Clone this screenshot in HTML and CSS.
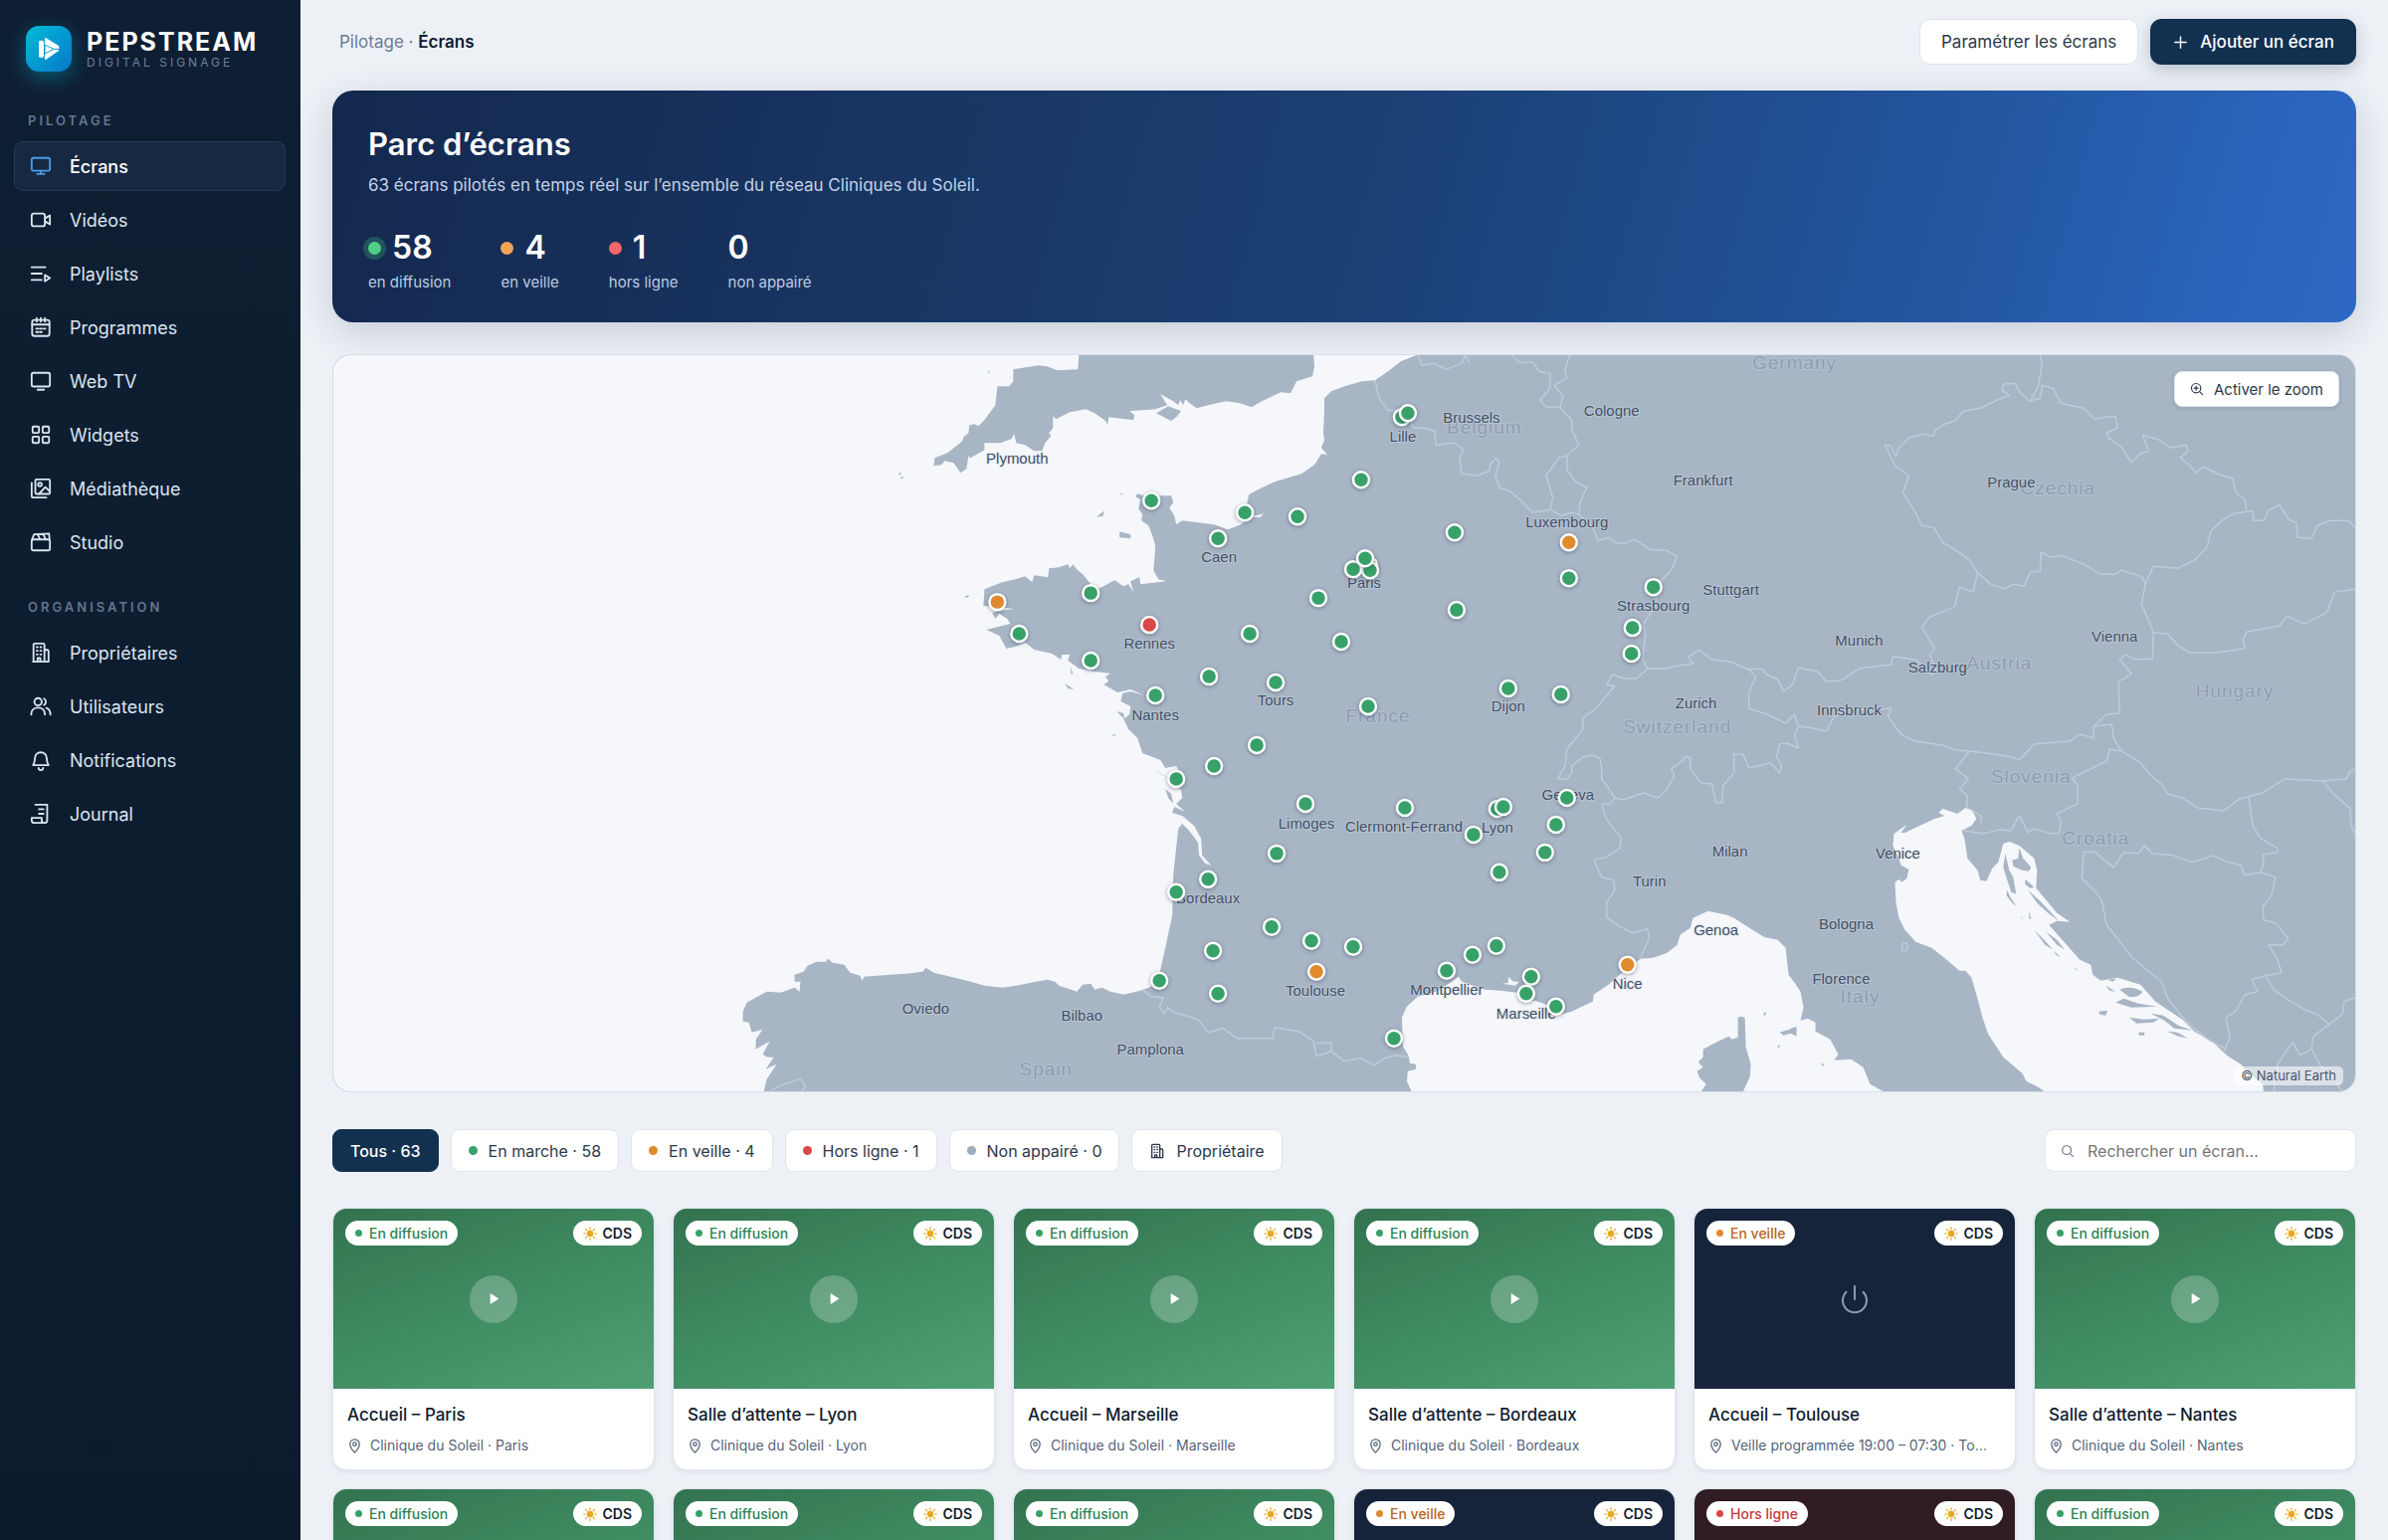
FILE: index.html
```html
<!DOCTYPE html>
<html lang="fr">
<head>
<meta charset="utf-8">
<meta name="viewport" content="width=device-width, initial-scale=1">
<title>Pepstream – Écrans</title>
<link rel="stylesheet" href="styles.css">
</head>
<body>
<svg class="sprite" aria-hidden="true">
  <symbol id="i-monitor" viewBox="0 0 24 24"><rect x="2" y="3" width="20" height="14" rx="2"/><path d="M12 17v3.500M8 20.500h8"/></symbol>
  <symbol id="i-video" viewBox="0 0 24 24"><rect x="2" y="5" width="14.500" height="14" rx="2.500"/><path d="M16.500 10.500 22 7v10l-5.500-3.500"/></symbol>
  <symbol id="i-playlist" viewBox="0 0 24 24"><path d="M2 5h15M2 12h11M2 19h11M16.500 13.500v7L22 17Z"/></symbol>
  <symbol id="i-calendar" viewBox="0 0 24 24"><rect x="2.500" y="4" width="19" height="17.500" rx="2.500"/><path d="M2.500 9h19M7.500 1.800v4M16.500 1.800v4M12 1.800v4"/><path d="M7 13.500h2M11 13.500h2M15 13.500h2M7 17.200h2M11 17.200h2"/></symbol>
  <symbol id="i-tv" viewBox="0 0 24 24"><rect x="2" y="3" width="20" height="15" rx="2"/><path d="M8.500 21.500h7"/></symbol>
  <symbol id="i-grid" viewBox="0 0 24 24"><rect x="3" y="3" width="7" height="7" rx="1"/><rect x="14" y="3" width="7" height="7" rx="1"/><rect x="3" y="14" width="7" height="7" rx="1"/><rect x="14" y="14" width="7" height="7" rx="1"/></symbol>
  <symbol id="i-images" viewBox="0 0 24 24"><rect x="6" y="2" width="16" height="16" rx="1.500"/><path d="M2 6v14.500A1.500 1.500 0 0 0 3.500 22H18M10 18l7-7.500 5 5"/><circle cx="11" cy="7.500" r="2"/></symbol>
  <symbol id="i-clap" viewBox="0 0 24 24"><rect x="2" y="9" width="20" height="12" rx="2"/><path d="M2.500 9 4.500 3.500 21 2.500 21.500 8M8.500 3.500l2.500 5M14.500 3l2.500 5"/></symbol>
  <symbol id="i-building" viewBox="0 0 24 24"><path d="M4 22V3.500A1.500 1.500 0 0 1 5.500 2h9A1.500 1.500 0 0 1 16 3.500V22M16 9h3a1.500 1.500 0 0 1 1.500 1.500V22H3.500M8.500 22v-4h3v4"/><path d="M7.500 6h1M11.500 6h1M7.500 10h1M11.500 10h1M7.500 14h1M11.500 14h1"/></symbol>
  <symbol id="i-users" viewBox="0 0 24 24"><circle cx="9" cy="7" r="4"/><path d="M1.500 21c0-4.500 3-7.500 7.500-7.500s7.500 3 7.500 7.500M15.500 3.500a4 4 0 0 1 0 7M18 13.800c3 1 4.500 3.700 4.500 7.200"/></symbol>
  <symbol id="i-bell" viewBox="0 0 24 24"><path d="M3.500 17.500c1.500-2 2-4 2-7.500a6.500 6.500 0 0 1 13 0c0 3.500.5 5.500 2 7.500ZM9.500 20.500a2.500 2.500 0 0 0 5 0"/></symbol>
  <symbol id="i-scroll" viewBox="0 0 24 24"><path d="M6 2h13v17a3 3 0 0 1-3 3H5a3 3 0 0 1-3-3v-2.500h11V19a3 3 0 0 0 3 3M10 7h5M10 12h5"/></symbol>
  <symbol id="i-plus" viewBox="0 0 24 24"><path d="M12 4v16M4 12h16"/></symbol>
  <symbol id="i-search" viewBox="0 0 24 24"><circle cx="10.500" cy="10.500" r="7.500"/><path d="m16 16 5.500 5.500"/></symbol>
  <symbol id="i-zoom" viewBox="0 0 24 24"><circle cx="10.500" cy="10.500" r="8"/><path d="m16.500 16.500 5 5M10.500 7v7M7 10.500h7"/></symbol>
  <symbol id="i-pin" viewBox="0 0 24 24"><path d="M12 22.500S4.500 15 4.500 9a7.500 7.500 0 0 1 15 0c0 6-7.500 13.500-7.500 13.500Z"/><circle cx="12" cy="9" r="2.800"/></symbol>
  <symbol id="i-play" viewBox="0 0 24 24"><path d="M5 2v20l16-10Z"/></symbol>
  <symbol id="i-power" viewBox="0 0 24 24"><path d="M12 2v10M18.400 6.600a9 9 0 1 1-12.800 0"/></symbol>
  <symbol id="i-sun" viewBox="0 0 24 24"><circle cx="12" cy="12" r="5.500" fill="currentColor" stroke="none"/><path d="M12 1v3.500M12 19.500V23M1 12h3.500M19.500 12H23M4.200 4.200l2.500 2.500M17.300 17.300l2.500 2.500M4.200 19.800l2.500-2.500M17.300 6.700l2.500-2.500"/></symbol>
</svg>

<div class="app">
  <aside class="sidebar">
    <div class="brand">
      <svg class="brand-logo" viewBox="0 0 138 138" aria-hidden="true">
        <rect x="39" y="44" width="15" height="52" rx="5" fill="#fff"/>
        <path d="M60 36 99 60Q103 66 99 75L60 102Q57 103 57 99V39Q57 35 60 36Z" fill="#fff"/>
        <path d="M57 57v27l27-14Z" fill="#fff" stroke="#129bd0" stroke-width="3" stroke-linejoin="round"/>
        <path d="M84 70h18" stroke="#129bd0" stroke-width="3"/>
      </svg>
      <div class="brand-text">
        <span class="brand-name">PEPSTREAM</span>
        <span class="brand-tag">DIGITAL SIGNAGE</span>
      </div>
    </div>
    <nav class="nav">
      <h2 class="nav-title">PILOTAGE</h2>
      <a class="nav-item active" href="#ecrans"><svg class="icon"><use href="#i-monitor"/></svg>Écrans</a>
      <a class="nav-item" href="#videos"><svg class="icon"><use href="#i-video"/></svg>Vidéos</a>
      <a class="nav-item" href="#playlists"><svg class="icon"><use href="#i-playlist"/></svg>Playlists</a>
      <a class="nav-item" href="#programmes"><svg class="icon"><use href="#i-calendar"/></svg>Programmes</a>
      <a class="nav-item" href="#webtv"><svg class="icon"><use href="#i-tv"/></svg>Web TV</a>
      <a class="nav-item" href="#widgets"><svg class="icon"><use href="#i-grid"/></svg>Widgets</a>
      <a class="nav-item" href="#mediatheque"><svg class="icon"><use href="#i-images"/></svg>Médiathèque</a>
      <a class="nav-item" href="#studio"><svg class="icon"><use href="#i-clap"/></svg>Studio</a>
      <h2 class="nav-title">ORGANISATION</h2>
      <a class="nav-item" href="#proprietaires"><svg class="icon"><use href="#i-building"/></svg>Propriétaires</a>
      <a class="nav-item" href="#utilisateurs"><svg class="icon"><use href="#i-users"/></svg>Utilisateurs</a>
      <a class="nav-item" href="#notifications"><svg class="icon"><use href="#i-bell"/></svg>Notifications</a>
      <a class="nav-item" href="#journal"><svg class="icon"><use href="#i-scroll"/></svg>Journal</a>
    </nav>
  </aside>

  <main class="main">
    <header class="topbar">
      <p class="crumbs">Pilotage · <strong>Écrans</strong></p>
      <div class="actions">
        <button class="btn" type="button">Paramétrer les écrans</button>
        <button class="btn btn-primary" type="button"><svg class="icon"><use href="#i-plus"/></svg>Ajouter un écran</button>
      </div>
    </header>

    <section class="hero">
      <h1>Parc d’écrans</h1>
      <p class="hero-sub">63 écrans pilotés en temps réel sur l’ensemble du réseau Cliniques du Soleil.</p>
      <div class="stats">
        <div class="stat"><p class="stat-value"><i class="stat-dot live"></i>58</p><p class="stat-label">en diffusion</p></div>
        <div class="stat"><p class="stat-value"><i class="stat-dot idle"></i>4</p><p class="stat-label">en veille</p></div>
        <div class="stat"><p class="stat-value"><i class="stat-dot down"></i>1</p><p class="stat-label">hors ligne</p></div>
        <div class="stat"><p class="stat-value">0</p><p class="stat-label">non appairé</p></div>
      </div>
    </section>

    <section class="map">
      <svg class="map-canvas" viewBox="334 356 2034 742" preserveAspectRatio="xMidYMid slice" role="img" aria-label="Carte des écrans">
        <g class="sea">
          <!-- Atlantic, Channel and North Sea -->
          <path d="M334 356H1084L1083 371 1062 372 1052 368 1043 367 1018 371 1018 383 1014 388 1002 388 1000 407 989 422 983 428 979 426 974 427 973 435 968 439 967 443 952 455 939 460 938 468 946 467 949 463 958 465 965 475 971 471 973 458 975 460 989 452 989 445 1005 445 1016 441 1019 436 1021 445 1030 447 1039 453 1047 453 1050 445 1056 438 1054 435 1058 430 1058 418 1061 421 1075 414 1091 411 1100 415 1111 423 1113 427 1114 419 1139 422 1140 417 1135 413 1161 411 1173 407 1166 396 1179 403 1184 407 1186 402 1189 407 1191 401 1198 407 1203 410 1214 407 1232 403 1246 405 1258 409 1268 403 1287 394 1297 395 1303 383 1319 378 1321 368 1320 356H1425L1408 363 1395 373 1382 382 1369 383 1351 388 1338 393 1331 400 1331 410 1330 435 1331 442 1328 450 1334 457 1328 456 1321 467 1308 476 1281 484 1264 492 1255 497 1253 507 1253 515 1262 518 1270 516 1266 520 1257 519 1247 527 1234 532 1220 527 1188 523 1182 527 1180 518 1175 510 1179 505 1177 498 1166 498 1155 500 1143 496 1141 499 1146 502 1144 511 1148 517 1147 523 1154 528 1158 538 1161 548 1160 563 1159 573 1164 582 1172 584 1146 587 1145 580 1136 584 1139 595 1134 587 1129 589 1120 583 1105 591 1096 587 1088 577 1082 572 1078 567 1075 571 1073 567 1064 570 1054 571 1053 580 1039 578 1037 585 1030 579 1020 582 1007 585 989 592 988 609 1000 610 1018 612 1004 614 997 616 1000 622 1004 617 1012 622 1015 627 991 633 1004 639 1011 652 1020 650 1030 646 1039 653 1057 657 1066 663 1067 658 1075 658 1073 664 1084 672 1100 675 1116 677 1111 680 1114 685 1109 688 1123 696 1136 693 1150 699 1136 695 1128 697 1126 705 1136 710 1135 718 1129 723 1134 733 1143 742 1148 757 1166 764 1171 772 1182 770 1186 777 1179 790 1187 794 1188 802 1182 808 1191 816 1180 811 1178 817 1188 820 1200 830 1207 843 1208 860 1217 870 1211 868 1205 860 1204 847 1195 835 1188 828 1184 833 1179 880 1178 920 1171 953 1165 980 1157 992 1146 996 1129 1000 1116 997 1107 993 1100 995 1096 989 1088 990 1082 997 1064 991 1060 987 1052 985 1041 987 1021 991 1007 993 989 991 975 987 955 982 938 978 930 973 927 977 911 979 895 980 868 982 866 986 864 981 854 978 848 970 836 968 832 964 829 967 820 967 811 971 807 977 798 980 798 987 804 987 803 997 798 993 784 998 770 997 759 1003 750 1008 746 1017 746 1027 752 1028 755 1038 766 1035 759 1045 759 1055 773 1047 766 1060 771 1063 777 1063 769 1075 780 1070 770 1085 767 1098H334Z"/>
          <!-- Western Mediterranean -->
          <path d="M1419 1098 1414 1087 1415 1077 1423 1075 1423 1070 1417 1069 1416 1062 1410 1052 1409 1023 1414 1012 1425 1002 1443 997 1458 988 1466 982 1469 987 1492 995 1508 996 1516 997 1527 998 1536 1007 1543 1006 1554 1010 1569 1020 1580 1017 1588 1013 1601 1007 1602 1000 1617 990 1628 980 1639 972 1649 964 1662 963 1676 958 1686 950 1689 940 1699 933 1702 923 1717 916 1736 920 1743 923 1757 932 1773 942 1787 945 1795 953 1798 980 1804 988 1810 997 1813 1013 1810 1026 1817 1024 1825 1028 1825 1037 1840 1045 1848 1060 1844 1066 1861 1065 1873 1073 1880 1090 1894 1098Z"/>
          <path d="M1516 982 1521 987 1527 987 1523 991 1510 989 1516 988Z"/>
          <!-- Adriatic -->
          <path d="M2056 1098 2049 1093 2037 1087 2033 1079 2014 1063 1999 1040 1993 1023 1989 1007 1982 983 1976 976 1970 976 1957 965 1942 953 1926 947 1915 935 1909 923 1906 907 1905 887 1909 884 1912 887 1917 883 1919 874 1911 870 1909 863 1903 850 1904 838 1917 829 1911 837 1915 837 1945 823 1955 820 1949 817 1953 813 1968 818 1976 812 1983 815 1987 823 1982 830 1972 835 1975 843 1978 863 1988 875 1991 885 1997 886 2003 873 2009 867 2014 848 2020 846 2030 850 2045 863 2048 875 2047 893 2068 918 2081 927 2068 926 2060 930 2076 948 2091 965 2102 970 2104 980 2112 986 2129 983 2152 990 2167 1007 2194 1025 2206 1037 2225 1048 2240 1062 2253 1070 2259 1077 2275 1090 2276 1098Z"/>
        </g>
        <g class="land">
          <path d="M1162 415 1174 408 1187 413 1183 418 1177 423Z"/>
          <path d="M1102 519 1110 513 1108 519ZM1125 534 1136 537 1136 541 1125 540ZM969 600 972 598 974 599 971 601ZM1070 687 1079 693 1073 692ZM1076 670 1078 678 1076 677ZM1122 715 1130 723 1129 717ZM1117 739 1122 740 1119 738ZM1161 775 1173 781 1179 784 1166 778ZM1171 793 1177 798 1179 808 1174 802ZM903 475h2v2h-2ZM905 479h2v2h-2ZM993 372h1v3h-1ZM1126 496h2v1h-2Z"/>
          <path d="M1750 1022 1754 1023 1755 1053 1760 1070 1759 1083 1752 1098H1710L1715 1090 1708 1083 1706 1077 1712 1073 1707 1068 1712 1063 1712 1055 1725 1048 1738 1042 1741 1045 1747 1043 1747 1023Z"/>
          <path d="M1789 1038 1799 1035 1806 1033 1806 1042 1800 1039 1793 1041ZM1773 1019 1775 1017 1775 1020 1773 1022ZM1787 1051h2v2h-2ZM1831 1068 1834 1071 1832 1072ZM1800 1034 1806 1032 1805 1041 1801 1039Z"/>
          <path d="M2016 858 2020 875 2024 882 2027 899 2022 897 2018 885 2014 872ZM2030 852 2034 863 2042 872 2040 876 2033 875 2024 871 2023 865 2029 863ZM2036 884 2045 892 2041 893 2036 889ZM2039 895 2050 905 2071 927 2059 918 2048 908ZM2018 895 2021 902 2027 911 2023 908 2017 900ZM2040 916 2042 924 2040 924ZM2031 921 2035 925 2032 923ZM2045 935 2055 945 2064 955 2056 950ZM2057 937 2067 944 2076 955 2068 950ZM2065 956 2072 963 2067 960ZM2085 972 2091 977 2086 974Z"/>
          <path d="M2131 995Q2142 990 2154 997 2150 1004 2140 1002ZM2127 1008 2135 1004 2150 1009 2169 1012 2143 1013ZM2141 1023 2155 1025 2171 1024 2165 1028 2148 1029ZM2162 1019 2175 1021 2190 1031 2204 1036 2186 1034 2176 1026ZM2110 1017 2119 1016 2117 1021 2111 1020ZM2179 1037 2189 1038 2200 1044 2190 1042ZM2150 1038h6v3h-5ZM2117 991 2127 997 2121 996ZM2119 985 2128 984 2124 987Z"/>
        </g>
        <g class="borders">
          <path d="M1382 382 1386 400 1395 412 1406 413 1416 420 1421 430 1432 430 1442 433 1443 447 1462 445 1471 452 1467 460 1469 476 1484 478 1497 473 1498 466 1504 460 1507 465 1503 477 1507 490 1517 493 1529 503 1540 515 1558 512 1569 518 1580 515 1587 517 1601 530 1606 543 1617 540 1624 545 1632 546 1643 542 1658 552 1675 553 1686 559 1680 573 1673 580 1664 592 1665 607 1652 627 1654 640 1651 662 1656 672 1645 682 1632 682 1621 678 1615 688 1623 690 1604 712 1591 722 1591 733 1575 753 1573 770 1566 783 1575 783 1580 777 1580 770 1591 761 1600 759 1608 762 1610 772 1610 784 1614 788 1623 802 1619 808 1610 808 1614 822 1621 832 1630 842 1628 853 1614 862 1602 864 1610 882 1622 885 1623 895 1615 907 1615 922 1626 930 1641 938 1656 934 1658 943 1649 963"/>
          <path d="M1623 802 1632 804 1652 797 1667 802 1676 793 1683 780 1680 773 1691 765 1695 760 1699 762 1699 773 1710 787 1721 788 1725 807 1731 807 1732 790 1743 777 1743 758 1752 758 1758 772 1780 767 1789 777 1791 770 1786 760 1789 748 1797 747 1808 752 1804 740 1808 730 1804 718 1795 727 1776 718 1758 712 1758 697 1765 680 1758 673"/>
          <path d="M1656 672 1673 672 1688 669 1702 667 1697 660 1708 653 1721 663 1739 665 1758 673 1771 672 1776 678 1787 683 1793 695 1802 688 1808 671 1827 675 1836 685 1850 684 1869 672 1901 668 1903 660 1926 663 1942 678 1947 675 1940 658 1945 652 1932 630 1940 620 1965 610 1970 590 1984 595 1988 575"/>
          <path d="M1808 730 1823 732 1836 735 1844 720 1860 712 1880 714 1901 712 1898 720 1911 738 1925 745 1953 749 1966 754 1980 755 2005 758 2022 761 2030 764 2045 748 2081 745 2091 738 2105 742 2105 730 2118 718 2131 717 2130 685 2143 677 2131 663 2137 658 2148 663 2164 662 2165 636 2160 623 2153 607 2157 587"/>
          <path d="M1988 575 2001 587 2016 592 2024 587 2035 589 2041 575 2051 574 2052 555 2062 560 2072 558 2095 567 2112 577 2127 577 2133 573 2154 580 2157 587 2165 569 2190 571 2206 563 2219 550 2223 533 2234 523 2246 516 2265 513 2266 523 2276 523 2281 513 2292 507 2301 522 2309 525 2310 540 2324 541 2330 528 2343 523 2361 523 2368 530"/>
          <path d="M2259 513 2257 502 2248 495 2245 481 2230 476 2215 469 2208 475 2201 467 2192 460 2200 453 2198 447 2183 450 2171 442 2154 437 2160 453 2151 456 2143 465 2133 449 2120 440 2118 435 2129 430 2127 418 2118 419 2106 421 2095 410 2072 405 2064 390 2053 387 2051 400 2040 403 2030 393 2026 385 2014 386 2013 392 2020 397 2005 403 1991 410 1974 413 1965 423 1955 426 1945 432 1944 438 1934 436 1919 440 1909 450 1906 459 1901 448 1895 447 1905 468 1919 478 1913 495 1924 512 1932 528 1944 530 1954 546 1965 552 1980 563 1988 575"/>
          <path d="M2051 356 2053 367 2049 388 2041 403M2165 636 2179 637 2190 649 2202 656 2229 656 2257 652 2255 643 2259 635 2292 629 2299 619 2317 627 2340 615 2347 595 2368 592"/>
          <path d="M2105 730 2123 728 2125 742 2133 755 2121 753 2118 765 2100 774 2083 782 2089 790 2089 808 2068 818 2072 825 2070 838 2062 838 2045 833 2039 837 2030 820 2022 835 2010 834 1995 838 1974 835M1980 755 1966 773 1979 783 1970 793 1978 800 1977 811 1991 820 1992 827"/>
          <path d="M2133 755 2152 767 2163 780 2175 790 2179 798 2194 802 2209 812 2236 815 2252 803 2275 797 2297 783 2336 785 2359 783 2363 775 2368 773M2336 785 2345 797 2363 813 2364 830 2368 838M2261 802 2265 830 2273 843 2290 853 2290 857 2275 859 2276 868 2273 877"/>
          <path d="M2238 1055 2220 1045 2204 1033 2196 1025 2179 1003 2173 987 2144 963 2118 930 2113 905 2108 898 2093 883 2095 857 2106 856 2116 865 2125 872 2135 857 2150 858 2156 850 2164 858 2185 860 2204 867 2225 860 2238 866 2253 870 2257 880 2273 877 2288 882 2284 900 2275 912 2276 925 2288 928 2301 944 2295 950 2281 950 2290 965 2294 978 2278 981 2264 985 2270 997 2257 1000 2248 1017 2238 1023 2242 1043 2236 1057"/>
          <path d="M2278 981 2286 995 2300 1005 2317 1015 2330 1020 2342 1030 2355 1020 2357 1007 2368 1003M2342 1030 2326 1042 2324 1055 2313 1061 2305 1048 2290 1070 2286 1098M2324 1055 2334 1073 2345 1082 2355 1098"/>
          <path d="M1519 356 1527 364 1541 364 1547 373 1558 375 1558 390 1548 402 1554 409 1568 409 1571 398 1562 387 1575 380 1573 372 1578 356M1425 356 1429 367 1442 365 1453 371 1469 365 1473 357 1477 364M1568 409 1580 422 1580 432 1587 447 1575 458 1567 460 1554 478 1561 500 1558 512M1575 458 1575 472 1584 484 1595 490 1588 505 1587 517"/>
          <path d="M1148 995 1157 1002 1169 1003 1165 1013 1170 1019 1173 1013 1180 1018 1204 1025 1214 1038 1229 1034 1243 1044 1279 1044 1281 1033 1305 1037 1320 1047 1323 1062 1338 1057 1351 1067 1368 1064 1381 1071 1392 1064 1403 1061 1416 1063M1323 1049 1338 1048 1338 1057M773 1097 788 1090 804 1085 809 1092 805 1098"/>
          <ellipse cx="1915" cy="952" rx="3" ry="4"/>
        </g>
        <g class="countries">
          <text x="1804" y="371">Germany</text><text x="1492" y="436">Belgium</text><text x="2069" y="497">Czechia</text><text x="2010" y="673">Austria</text><text x="2247" y="701">Hungary</text><text x="1385" y="726">France</text><text x="1686" y="737">Switzerland</text><text x="2042" y="787">Slovenia</text><text x="2107" y="849">Croatia</text><text x="1870" y="1008">Italy</text><text x="1051" y="1081">Spain</text>
        </g>
        <g class="cities">
          <text x="1022" y="466">Plymouth</text><text x="1225" y="565">Caen</text><text x="1155" y="652">Rennes</text><text x="1161" y="724">Nantes</text><text x="1410" y="444">Lille</text><text x="1479" y="425">Brussels</text><text x="1620" y="418">Cologne</text><text x="1712" y="488">Frankfurt</text><text x="1575" y="530">Luxembourg</text><text x="1371" y="591">Paris</text><text x="1662" y="614">Strasbourg</text><text x="1740" y="598">Stuttgart</text><text x="1282" y="709">Tours</text><text x="1516" y="715">Dijon</text><text x="1705" y="712">Zurich</text><text x="2022" y="490">Prague</text><text x="1869" y="649">Munich</text><text x="2126" y="645">Vienna</text><text x="1948" y="676">Salzburg</text><text x="1859" y="719">Innsbruck</text><text x="930" y="1019">Oviedo</text><text x="1087" y="1026">Bilbao</text><text x="1156" y="1060">Pamplona</text><text x="1214" y="908">Bordeaux</text><text x="1313" y="833">Limoges</text><text x="1411" y="836">Clermont-Ferrand</text><text x="1505" y="837">Lyon</text><text x="1576" y="804">Geneva</text><text x="1739" y="861">Milan</text><text x="1658" y="891">Turin</text><text x="1725" y="940">Genoa</text><text x="1636" y="994">Nice</text><text x="1322" y="1001">Toulouse</text><text x="1454" y="1000">Montpellier</text><text x="1534" y="1024">Marseille</text><text x="1908" y="863">Venice</text><text x="1856" y="934">Bologna</text><text x="1851" y="989">Florence</text>
        </g>
        <g class="pins">
          <circle cx="1157" cy="503" r="8"/><circle cx="1224" cy="541" r="8"/><circle cx="1096" cy="596" r="8"/><circle class="idle" cx="1002" cy="605" r="8"/><circle cx="1024" cy="637" r="8"/><circle class="down" cx="1155" cy="628" r="8"/><circle cx="1096" cy="664" r="8"/><circle cx="1215" cy="680" r="8"/><circle cx="1161" cy="699" r="8"/>
          <circle cx="1251" cy="515" r="8"/><circle cx="1304" cy="519" r="8"/><circle cx="1368" cy="482" r="8"/><circle cx="1409" cy="419" r="8"/><circle cx="1415" cy="415" r="8"/><circle cx="1462" cy="535" r="8"/><circle cx="1376" cy="568" r="8"/><circle cx="1377" cy="573" r="8"/><circle cx="1360" cy="572" r="8"/><circle cx="1372" cy="561" r="8"/><circle cx="1325" cy="601" r="8"/><circle cx="1256" cy="637" r="8"/><circle cx="1464" cy="613" r="8"/><circle cx="1348" cy="645" r="8"/>
          <circle class="idle" cx="1577" cy="545" r="8"/><circle cx="1577" cy="581" r="8"/><circle cx="1662" cy="590" r="8"/><circle cx="1641" cy="631" r="8"/><circle cx="1640" cy="657" r="8"/><circle cx="1282" cy="686" r="8"/><circle cx="1375" cy="710" r="8"/><circle cx="1516" cy="692" r="8"/><circle cx="1569" cy="698" r="8"/><circle cx="1263" cy="749" r="8"/>
          <circle cx="1220" cy="770" r="8"/><circle cx="1182" cy="783" r="8"/><circle cx="1214" cy="884" r="8"/><circle cx="1182" cy="897" r="8"/><circle cx="1219" cy="956" r="8"/><circle cx="1165" cy="986" r="8"/><circle cx="1224" cy="999" r="8"/>
          <circle cx="1312" cy="808" r="8"/><circle cx="1412" cy="812" r="8"/><circle cx="1505" cy="813" r="8"/><circle cx="1511" cy="811" r="8"/><circle cx="1481" cy="839" r="8"/><circle cx="1575" cy="802" r="8"/><circle cx="1564" cy="829" r="8"/><circle cx="1553" cy="857" r="8"/><circle cx="1507" cy="877" r="8"/><circle cx="1283" cy="858" r="8"/><circle cx="1278" cy="932" r="8"/><circle cx="1318" cy="946" r="8"/><circle cx="1360" cy="952" r="8"/><circle class="idle" cx="1323" cy="977" r="8"/><circle cx="1454" cy="976" r="8"/><circle cx="1480" cy="960" r="8"/><circle cx="1504" cy="951" r="8"/><circle cx="1539" cy="982" r="8"/><circle cx="1534" cy="999" r="8"/><circle cx="1564" cy="1012" r="8"/><circle class="idle" cx="1636" cy="970" r="8"/><circle cx="1401" cy="1044" r="8"/>
        </g>
      </svg>
      <button class="map-zoom" type="button"><svg class="icon"><use href="#i-zoom"/></svg>Activer le zoom</button>
      <p class="map-credit">© Natural Earth</p>
    </section>

    <div class="toolbar">
      <div class="filters">
        <button class="chip selected" type="button">Tous · 63</button>
        <button class="chip" type="button"><i class="dot live"></i>En marche · 58</button>
        <button class="chip" type="button"><i class="dot idle"></i>En veille · 4</button>
        <button class="chip" type="button"><i class="dot down"></i>Hors ligne · 1</button>
        <button class="chip" type="button"><i class="dot"></i>Non appairé · 0</button>
        <button class="chip" type="button"><svg class="icon"><use href="#i-building"/></svg>Propriétaire</button>
      </div>
      <label class="search"><svg class="icon"><use href="#i-search"/></svg><input type="search" placeholder="Rechercher un écran…" aria-label="Rechercher un écran"></label>
    </div>

    <section class="grid">
      <article class="card">
        <div class="media live"><span class="badge live"><i class="dot live"></i>En diffusion</span><span class="badge owner"><svg class="icon"><use href="#i-sun"/></svg>CDS</span><button class="play" type="button" aria-label="Lire"><svg class="icon"><use href="#i-play"/></svg></button></div>
        <div class="info"><h3>Accueil – Paris</h3><p><svg class="icon"><use href="#i-pin"/></svg><span>Clinique du Soleil · Paris</span></p></div>
      </article>
      <article class="card">
        <div class="media live"><span class="badge live"><i class="dot live"></i>En diffusion</span><span class="badge owner"><svg class="icon"><use href="#i-sun"/></svg>CDS</span><button class="play" type="button" aria-label="Lire"><svg class="icon"><use href="#i-play"/></svg></button></div>
        <div class="info"><h3>Salle d’attente – Lyon</h3><p><svg class="icon"><use href="#i-pin"/></svg><span>Clinique du Soleil · Lyon</span></p></div>
      </article>
      <article class="card">
        <div class="media live"><span class="badge live"><i class="dot live"></i>En diffusion</span><span class="badge owner"><svg class="icon"><use href="#i-sun"/></svg>CDS</span><button class="play" type="button" aria-label="Lire"><svg class="icon"><use href="#i-play"/></svg></button></div>
        <div class="info"><h3>Accueil – Marseille</h3><p><svg class="icon"><use href="#i-pin"/></svg><span>Clinique du Soleil · Marseille</span></p></div>
      </article>
      <article class="card">
        <div class="media live"><span class="badge live"><i class="dot live"></i>En diffusion</span><span class="badge owner"><svg class="icon"><use href="#i-sun"/></svg>CDS</span><button class="play" type="button" aria-label="Lire"><svg class="icon"><use href="#i-play"/></svg></button></div>
        <div class="info"><h3>Salle d’attente – Bordeaux</h3><p><svg class="icon"><use href="#i-pin"/></svg><span>Clinique du Soleil · Bordeaux</span></p></div>
      </article>
      <article class="card">
        <div class="media idle"><span class="badge idle"><i class="dot idle"></i>En veille</span><span class="badge owner"><svg class="icon"><use href="#i-sun"/></svg>CDS</span><svg class="icon power"><use href="#i-power"/></svg></div>
        <div class="info"><h3>Accueil – Toulouse</h3><p><svg class="icon"><use href="#i-pin"/></svg><span>Veille programmée 19:00 – 07:30 · Toulouse</span></p></div>
      </article>
      <article class="card">
        <div class="media live"><span class="badge live"><i class="dot live"></i>En diffusion</span><span class="badge owner"><svg class="icon"><use href="#i-sun"/></svg>CDS</span><button class="play" type="button" aria-label="Lire"><svg class="icon"><use href="#i-play"/></svg></button></div>
        <div class="info"><h3>Salle d’attente – Nantes</h3><p><svg class="icon"><use href="#i-pin"/></svg><span>Clinique du Soleil · Nantes</span></p></div>
      </article>
      <article class="card"><div class="media live"><span class="badge live"><i class="dot live"></i>En diffusion</span><span class="badge owner"><svg class="icon"><use href="#i-sun"/></svg>CDS</span></div></article>
      <article class="card"><div class="media live"><span class="badge live"><i class="dot live"></i>En diffusion</span><span class="badge owner"><svg class="icon"><use href="#i-sun"/></svg>CDS</span></div></article>
      <article class="card"><div class="media live"><span class="badge live"><i class="dot live"></i>En diffusion</span><span class="badge owner"><svg class="icon"><use href="#i-sun"/></svg>CDS</span></div></article>
      <article class="card"><div class="media idle"><span class="badge idle"><i class="dot idle"></i>En veille</span><span class="badge owner"><svg class="icon"><use href="#i-sun"/></svg>CDS</span></div></article>
      <article class="card"><div class="media down"><span class="badge down"><i class="dot down"></i>Hors ligne</span><span class="badge owner"><svg class="icon"><use href="#i-sun"/></svg>CDS</span></div></article>
      <article class="card"><div class="media live"><span class="badge live"><i class="dot live"></i>En diffusion</span><span class="badge owner"><svg class="icon"><use href="#i-sun"/></svg>CDS</span></div></article>
    </section>
  </main>
</div>
</body>
</html>
```
FILE: styles.css
```css
:root {
  --navy: #12304f;
  --ink: #0f1b2d;
  --text: #2b394b;
  --muted: #6b7c93;
  --line: #dfe5ed;
  --live: #38a169;
  --idle: #e08a2e;
  --down: #d94848;
}

* { box-sizing: border-box; }

body {
  margin: 0;
  background: #edf1f6;
  color: var(--ink);
  font-family: Inter, "Liberation Sans", sans-serif;
  font-size: 17px;
}

h1, h2, h3, p { margin: 0; }
a { color: inherit; text-decoration: none; }
button, input { font: inherit; color: inherit; }

.sprite { position: absolute; width: 0; height: 0; }

.icon {
  width: 22px;
  height: 22px;
  flex: none;
  fill: none;
  stroke: currentColor;
  stroke-width: 2;
  stroke-linecap: round;
  stroke-linejoin: round;
}

.app { display: flex; height: 100vh; overflow: hidden; }

/* Sidebar */
.sidebar {
  width: 302px;
  flex: none;
  padding: 26px 15px 26px 14px;
  background: linear-gradient(180deg, #0f1f33, #0b1a2c);
  color: #dbe5f0;
}

.brand { display: flex; align-items: center; gap: 15px; padding-left: 12px; }
.brand-logo {
  width: 46px;
  height: 46px;
  border-radius: 13px;
  background: linear-gradient(135deg, #00bcd9, #0878c8);
  box-shadow: 0 6px 20px rgba(0, 180, 216, .4);
}
.brand-text { display: flex; flex-direction: column; gap: 1px; }
.brand-name { font-size: 25px; line-height: 26px; font-weight: 700; letter-spacing: 2px; color: #fff; }
.brand-tag { font-size: 12px; line-height: 14px; letter-spacing: 3px; color: #6d7f99; }

.nav { display: flex; flex-direction: column; gap: 4px; padding-top: 40px; }
.nav-title {
  padding: 0 14px 8px;
  font-size: 13px;
  line-height: 18px;
  font-weight: 600;
  letter-spacing: 3px;
  color: #64758e;
}
.nav-item ~ .nav-title { padding-top: 27px; }
.nav-item {
  display: flex;
  align-items: center;
  gap: 18px;
  height: 50px;
  padding: 0 15px;
  border: 1px solid transparent;
  border-radius: 9px;
  font-size: 18px;
}
.nav-item.active { background: #172942; border-color: #233a5a; color: #fff; font-weight: 500; }
.nav-item.active .icon { color: #4a9bea; }

/* Main column */
.main { flex: 1; min-width: 0; padding: 0 32px; overflow: hidden; }

.topbar { display: flex; justify-content: space-between; align-items: center; padding: 19px 0 26px; }
.crumbs { padding-left: 7px; color: var(--muted); }
.crumbs strong { font-weight: 600; color: var(--ink); }
.actions { display: flex; gap: 12px; }
.btn {
  display: flex;
  align-items: center;
  gap: 11px;
  height: 46px;
  padding: 0 21px;
  border: 1px solid var(--line);
  border-radius: 11px;
  background: #fff;
  color: var(--text);
}
.btn-primary {
  border-color: var(--navy);
  background: var(--navy);
  color: #fff;
  font-weight: 500;
  box-shadow: 0 5px 16px rgba(18, 48, 79, .25);
}
.btn-primary .icon { width: 17px; height: 17px; }

.hero {
  padding: 35px 36px 30px;
  border-radius: 21px;
  background: linear-gradient(105deg, #14284e 0%, #1b3f72 50%, #21539a 76%, #2d69c5 100%);
  box-shadow: 0 10px 36px rgba(20, 40, 78, .18);
  color: #fff;
}
.hero h1 { font-size: 31px; line-height: 38px; font-weight: 600; }
.hero-sub { margin-top: 8px; font-size: 17px; line-height: 28px; color: #c5d2e6; }
.stats { display: flex; gap: 50px; margin-top: 29px; }
.stat-value { display: flex; align-items: center; gap: 11px; font-size: 32px; line-height: 40px; font-weight: 600; }
.stat-label { margin-top: 5px; font-size: 15px; line-height: 20px; color: #bccbe0; }
.stat-dot { width: 13px; height: 13px; border-radius: 50%; }
.stat-dot.live { background: #4fcf85; box-shadow: 0 0 0 5px rgba(79, 207, 133, .25); }
.stat-dot.idle { background: #f0a45a; }
.stat-dot.down { background: #f8656a; }

/* Map */
.map {
  position: relative;
  margin-top: 32px;
  aspect-ratio: 2034 / 742;
  border: 1px solid #d6dee8;
  border-radius: 18px;
  overflow: hidden;
  background: #a8b5c5;
}
.map-canvas { display: block; width: 100%; height: 100%; }
.sea { fill: #f5f7fb; }
.land { fill: #a8b5c5; }
.borders { fill: none; stroke: #bfcbdb; stroke-width: 1.5; stroke-linejoin: round; }
.countries, .cities {
  font-family: "Liberation Sans", Arial, sans-serif;
  text-anchor: middle;
  paint-order: stroke;
  stroke-linejoin: round;
}
.countries { font-size: 19px; letter-spacing: 1px; fill: #8d9db3; stroke: rgba(214, 222, 234, .3); stroke-width: 2; }
.cities { font-size: 15px; fill: #425166; stroke: rgba(214, 222, 234, .4); stroke-width: 2; }
.pins { fill: #38a169; stroke: #fff; stroke-width: 2.5; }
.pins circle { filter: drop-shadow(0 1px 2px rgba(15, 27, 45, .4)); }
.pins .idle { fill: var(--idle); }
.pins .down { fill: var(--down); }
.map-zoom {
  position: absolute;
  top: 16px;
  right: 16px;
  display: flex;
  align-items: center;
  gap: 10px;
  height: 36px;
  padding: 0 15px;
  border: 1px solid var(--line);
  border-radius: 8px;
  background: #fff;
  color: var(--text);
  font-size: 15px;
  box-shadow: 0 1px 4px rgba(15, 27, 45, .15);
}
.map-zoom .icon { width: 14px; height: 14px; }
.map-credit {
  position: absolute;
  right: 12px;
  bottom: 6px;
  padding: 0 7px;
  border-radius: 5px;
  background: rgba(255, 255, 255, .6);
  font-size: 13px;
  line-height: 19px;
  color: #47566b;
}

/* Filters and search */
.toolbar { display: flex; justify-content: space-between; padding: 37px 0 36px; }
.filters { display: flex; gap: 12px; }
.chip {
  display: flex;
  align-items: center;
  gap: 11px;
  height: 43px;
  padding: 0 17px;
  border: 1px solid var(--line);
  border-radius: 9px;
  background: #fff;
  color: var(--text);
  font-size: 16px;
}
.chip.selected { border-color: var(--navy); background: var(--navy); color: #fff; font-weight: 500; }
.chip .icon { width: 16px; height: 16px; }
.dot { width: 9px; height: 9px; flex: none; border-radius: 50%; background: #9dabba; }
.dot.live { background: var(--live); }
.dot.idle { background: var(--idle); }
.dot.down { background: var(--down); }
.search {
  display: flex;
  align-items: center;
  gap: 13px;
  width: 313px;
  height: 43px;
  padding: 0 15px;
  border: 1px solid var(--line);
  border-radius: 9px;
  background: #fff;
  color: #6b7c93;
}
.search .icon { width: 14px; height: 14px; }
.search input { flex: 1; min-width: 0; padding: 0; border: 0; outline: 0; background: none; font-size: 16px; }
.search input::placeholder { color: #757575; }

/* Screen cards */
.grid { display: grid; grid-template-columns: repeat(6, minmax(0, 1fr)); gap: 18px; }
.card {
  border: 1px solid var(--line);
  border-radius: 14px;
  overflow: hidden;
  background: #fff;
  box-shadow: 0 2px 5px rgba(15, 27, 45, .07);
}
.media {
  position: relative;
  display: grid;
  place-items: center;
  aspect-ratio: 16 / 9;
}
.media.live { background: linear-gradient(160deg, #33734f 0%, #3f8b62 50%, #4f9f74 100%); }
.media.idle { background: #16243b; }
.media.down { background: #311c24; }
.badge {
  position: absolute;
  top: 12px;
  left: 12px;
  display: flex;
  align-items: center;
  gap: 7px;
  height: 25px;
  padding: 0 10px;
  border-radius: 13px;
  background: #fff;
  font-size: 14px;
  font-weight: 500;
}
.badge .dot { width: 7px; height: 7px; }
.badge.live { color: #2b8253; }
.badge.idle { color: #b8651b; }
.badge.down { color: #c53a3a; }
.badge.owner { left: auto; right: 12px; gap: 5px; font-weight: 600; }
.badge.owner .icon { width: 14px; height: 14px; color: #e8a820; }
.play {
  display: grid;
  place-items: center;
  width: 48px;
  height: 48px;
  padding: 0;
  border: 0;
  border-radius: 50%;
  background: rgba(255, 255, 255, .23);
  color: #fff;
}
.play .icon { width: 13px; height: 13px; fill: currentColor; stroke: none; }
.power { width: 32px; height: 32px; stroke-width: 1.5; color: #8c9bb5; }
.info { padding: 14px 22px 14px 14px; }
.info h3 { font-size: 17px; line-height: 24px; font-weight: 500; }
.info p { display: flex; align-items: center; gap: 8px; margin-top: 9px; font-size: 14px; line-height: 20px; color: #55647a; }
.info p span { overflow: hidden; white-space: nowrap; text-overflow: ellipsis; }
.info .icon { width: 15px; height: 15px; }
```
